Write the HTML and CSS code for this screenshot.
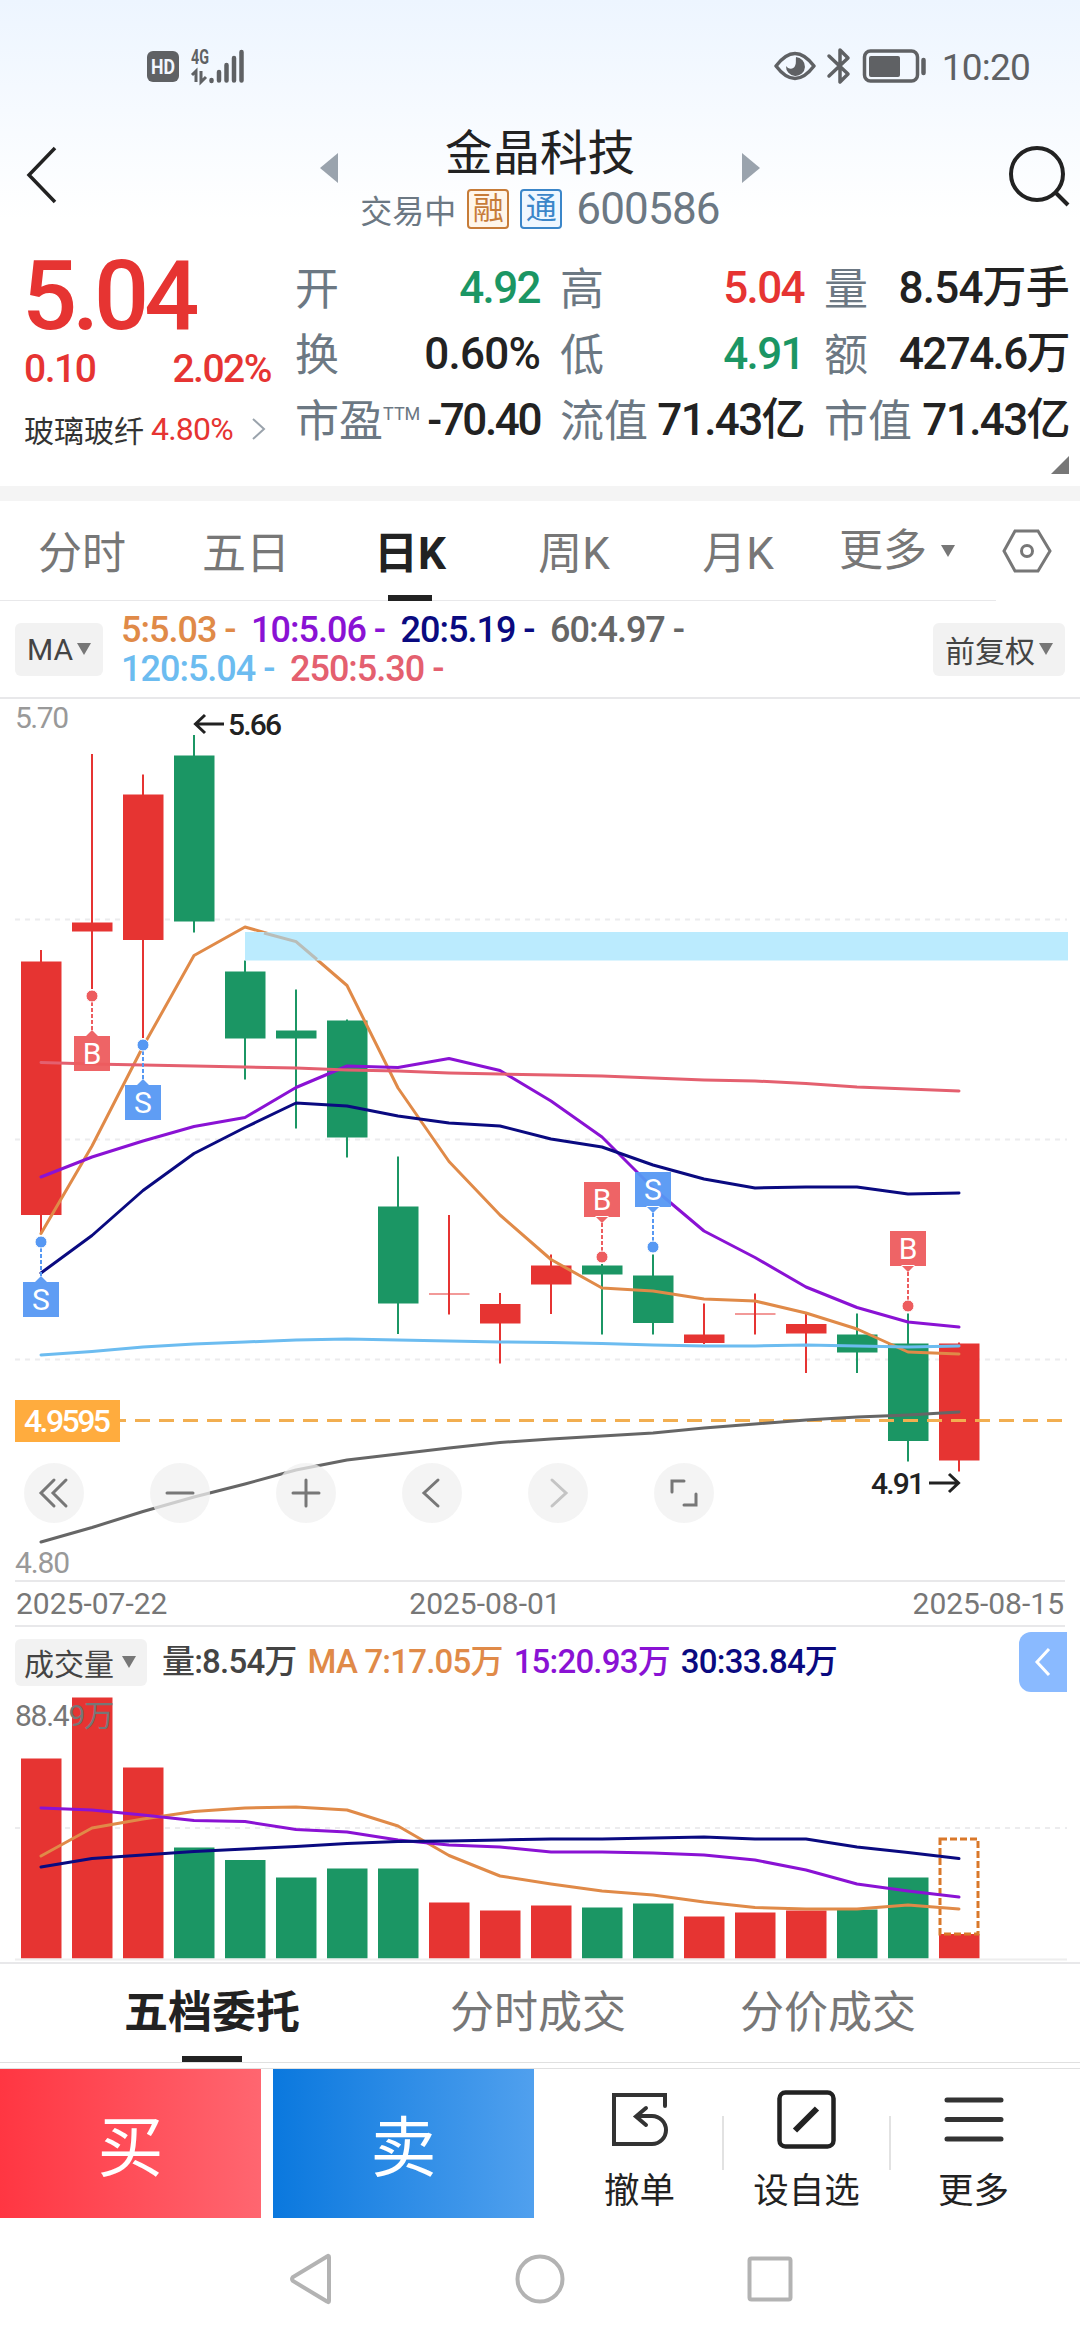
FILE: index.html
```html
<!DOCTYPE html>
<html lang="zh-CN">
<head>
    <meta charset="UTF-8">
    <meta name="viewport" content="width=device-width, initial-scale=1.0">
    <title>金晶科技 600586</title>
    <link rel="stylesheet" href="styles.css">
</head>
<body>
    <div class="top">
        <div class="status-bar">
            <svg class="signal" width="100" height="40" viewBox="0 0 100 40">
                <rect x="1" y="5" width="32" height="31" rx="6" fill="#5f6164"/>
                <text x="17" y="27.500" class="hd" text-anchor="middle" textLength="24" lengthAdjust="spacingAndGlyphs">HD</text>
                <text x="45" y="18" class="net" textLength="18" lengthAdjust="spacingAndGlyphs">4G</text>
                <path d="M46 29l4-4v11M55 25v11l5-5" fill="none" stroke="#5f6164" stroke-width="3"/>
                <path d="M65.500 34v1M73 26v8.500M80.500 19v15.500M88 12v22.500M95.500 6v28.500" stroke="#5f6164" stroke-width="4.500" stroke-linecap="round"/>
            </svg>
            <div class="status-right">
                <svg width="154" height="40" viewBox="0 0 154 40">
                    <path d="M2 20Q21-5 40 20Q21 45 2 20Z" fill="none" stroke="#5f6164" stroke-width="3.500" stroke-linejoin="round"/>
                    <path d="M22 11a9.500 9.500 0 1 1-10 9c2 3 7 4 9 0c1.500-3 .5-6 1-9z" fill="#5f6164"/>
                    <path d="M55 10l19 18-8 8V4l8 8-19 18" fill="none" stroke="#5f6164" stroke-width="3.500" stroke-linejoin="round" stroke-linecap="round"/>
                    <rect x="90.500" y="5" width="53" height="30" rx="6" fill="none" stroke="#5f6164" stroke-width="3.500"/>
                    <rect x="95" y="10" width="31" height="21" rx="2" fill="#5f6164"/>
                    <path d="M149.500 14v13" stroke="#5f6164" stroke-width="4.500" stroke-linecap="round"/>
                </svg>
                <span class="time">10:20</span>
            </div>
        </div>
        <div class="header">
            <svg class="back" width="36" height="60" viewBox="0 0 36 60"><path d="M31 3L5 30l26 27" fill="none" stroke="#222" stroke-width="3.500"/></svg>
            <div class="stock">
                <span class="prev"></span>
                <div class="stock-name">
                    <h1 class="title">金晶科技</h1>
                    <div class="subtitle">
                        <span>交易中</span>
                        <span class="badge rong">融</span>
                        <span class="badge tong">通</span>
                        <span class="code">600586</span>
                    </div>
                </div>
                <span class="next"></span>
            </div>
            <svg class="search" width="64" height="62" viewBox="0 0 64 62"><circle cx="29" cy="29" r="26" fill="none" stroke="#222" stroke-width="4"/><path d="M48 48l12 12" stroke="#222" stroke-width="4"/></svg>
        </div>
    </div>

    <div class="quote">
        <div class="quote-main">
            <div class="price">5.04</div>
            <div class="change"><span>0.10</span><span>2.02%</span></div>
            <div class="sector">
                <span>玻璃玻纤</span><span class="sector-pct">4.80%</span>
                <svg width="14" height="22" viewBox="0 0 14 22"><path d="M1 1l11 10L1 21" fill="none" stroke="#9aa3ac" stroke-width="2"/></svg>
            </div>
        </div>
        <div class="quote-grid">
            <div class="cell"><span>开</span><b class="green">4.92</b></div>
            <div class="cell"><span>高</span><b class="red">5.04</b></div>
            <div class="cell"><span>量</span><b class="loose">8.54万手</b></div>
            <div class="cell"><span>换</span><b class="loose">0.60%</b></div>
            <div class="cell"><span>低</span><b class="green">4.91</b></div>
            <div class="cell"><span>额</span><b>4274.6万</b></div>
            <div class="cell"><span>市盈<sup>TTM</sup></span><b class="tight">-70.40</b></div>
            <div class="cell"><span>流值</span><b>71.43亿</b></div>
            <div class="cell"><span>市值</span><b>71.43亿</b></div>
        </div>
        <i class="expand"></i>
    </div>

    <div class="tabs">
        <div class="tab">分时</div>
        <div class="tab">五日</div>
        <div class="tab active">日K</div>
        <div class="tab">周K</div>
        <div class="tab">月K</div>
        <div class="tab more">更多<i class="caret"></i></div>
        <svg class="settings" width="50" height="46" viewBox="0 0 50 46"><path d="M13 3h23l12 20-12 20H13L2 23z" fill="none" stroke="#777" stroke-width="3"/><circle cx="25" cy="23" r="5.500" fill="none" stroke="#777" stroke-width="3"/></svg>
    </div>

    <div class="ma-bar">
        <div class="pill">MA<i class="caret"></i></div>
        <div class="ma-list">
            <div><span class="ma5">5:5.03 -</span><span class="ma10">10:5.06 -</span><span class="ma20">20:5.19 -</span><span class="ma60">60:4.97 -</span></div>
            <div><span class="ma120">120:5.04 -</span><span class="ma250">250:5.30 -</span></div>
        </div>
        <div class="pill">前复权<i class="caret"></i></div>
    </div>

    <div class="k-chart">
        <svg id="kline" width="1080" height="882" viewBox="0 699 1080 882"></svg>
        <div class="tools">
            <span class="tool"><svg viewBox="0 0 60 60"><path d="M30 17L17 30l13 13M42 17L29 30l13 13"/></svg></span>
            <span class="tool"><svg viewBox="0 0 60 60"><path d="M17 30h26"/></svg></span>
            <span class="tool"><svg viewBox="0 0 60 60"><path d="M17 30h26M30 17v26"/></svg></span>
            <span class="tool"><svg viewBox="0 0 60 60"><path d="M36 17L22 30l14 13"/></svg></span>
            <span class="tool disabled"><svg viewBox="0 0 60 60"><path d="M24 17l14 13-14 13"/></svg></span>
            <span class="tool"><svg viewBox="0 0 60 60"><path d="M18 29V18h12M42 31v11H30"/></svg></span>
        </div>
    </div>
    <div class="dates"><span>2025-07-22</span><span>2025-08-01</span><span>2025-08-15</span></div>

    <div class="vol-bar">
        <div class="pill">成交量<i class="caret"></i></div>
        <div class="vol-list"><span class="vol">量:8.54万</span><span class="ma5">MA 7:17.05万</span><span class="ma10">15:20.93万</span><span class="ma20">30:33.84万</span></div>
        <div class="drawer"><svg width="18" height="30" viewBox="0 0 18 30"><path d="M15 2L3 15l12 13" fill="none" stroke="#fff" stroke-width="3"/></svg></div>
    </div>
    <svg id="volume" width="1080" height="269" viewBox="0 1693 1080 269"></svg>

    <div class="sub-tabs">
        <div class="sub-tab active">五档委托</div>
        <div class="sub-tab">分时成交</div>
        <div class="sub-tab">分价成交</div>
    </div>

    <div class="actions">
        <div class="trade buy">买</div>
        <div class="trade sell">卖</div>
        <div class="action">
            <svg width="60" height="60" viewBox="0 0 60 60"><path d="M55 16V5H4v49h38a14 14 0 0 0 0-28H27M36 18l-10 8.500 10 8.500" fill="none" stroke="#333" stroke-width="4" stroke-linecap="round"/></svg>
            <span>撤单</span>
        </div>
        <div class="action">
            <svg width="60" height="60" viewBox="0 0 60 60"><rect x="2.500" y="2.500" width="54" height="54" rx="6" fill="none" stroke="#222" stroke-width="4.500"/><path d="M18 40.500L40 18.500" stroke="#222" stroke-width="6"/></svg>
            <span>设自选</span>
        </div>
        <div class="action">
            <svg width="60" height="60" viewBox="0 0 60 60"><path d="M3 10h54M3 29.500h54M3 49h54" stroke="#333" stroke-width="5" stroke-linecap="round"/></svg>
            <span>更多</span>
        </div>
    </div>

    <div class="nav">
        <svg width="44" height="52" viewBox="0 0 44 52"><path d="M40 4v44q0 2-2 .5L4 28q-2-2 0-4L38 3.500q2-1.500 2 .5z" fill="none" stroke="#b3b3b3" stroke-width="4"/></svg>
        <svg width="50" height="50" viewBox="0 0 50 50"><circle cx="25" cy="25" r="22.500" fill="none" stroke="#b3b3b3" stroke-width="4"/></svg>
        <svg width="46" height="46" viewBox="0 0 46 46"><rect x="2.500" y="2.500" width="41" height="41" rx="2" fill="none" stroke="#b3b3b3" stroke-width="4"/></svg>
    </div>

    <script src="script.js"></script>
</body>
</html>
```
FILE: styles.css
```css
:root {
    --red: #e63432;
    --green: #1b9664;
    --dark: #222;
    --gray: #777;
    --slate: #6c7883;
    --line: #e8e8ea;
    --orange: #e08a48;
    --purple: #8a12d4;
    --navy: #0a0a80;
}

* {
    box-sizing: border-box;
}

body {
    margin: 0;
    width: 1080px;
    height: 2340px;
    overflow: hidden;
    background: #fff;
    color: var(--dark);
    font-family: Roboto, "Noto Sans CJK SC", sans-serif;
}

svg {
    display: block;
}

.top {
    height: 240px;
    background: linear-gradient(#edf5ff, #fff 220px);
}

.status-bar {
    height: 130px;
    padding: 46px 50px 0 146px;
    display: flex;
    justify-content: space-between;
}

.hd {
    font-size: 20px;
    font-weight: 700;
    fill: #f2f7ff;
}

.net {
    font-size: 20px;
    font-weight: 700;
    fill: #5f6164;
}

.status-right {
    display: flex;
    gap: 14px;
}

.time {
    font-size: 37px;
    line-height: 44px;
    letter-spacing: -0.8px;
    color: #5f6164;
}

.header {
    height: 110px;
    display: flex;
    justify-content: space-between;
    align-items: flex-start;
    padding: 0 8px 0 24px;
}

.back,
.search {
    margin-top: 15px;
}

.stock {
    display: flex;
    justify-content: space-between;
    width: 440px;
    margin-left: 12px;
}

.prev,
.next {
    margin-top: 23px;
    border: 15px solid transparent;
    height: 0;
}

.prev {
    border-left: 0;
    border-right: 18px solid #9aa3ad;
}

.next {
    border-right: 0;
    border-left: 18px solid #9aa3ad;
}

.title {
    margin: 0;
    font-size: 47.500px;
    line-height: 49px;
    font-weight: 400;
    text-align: center;
}

.subtitle {
    display: flex;
    align-items: center;
    height: 60px;
    font-size: 32px;
    color: var(--slate);
}

.badge {
    width: 42px;
    height: 40px;
    line-height: 36px;
    margin-left: 11px;
    border: 2px solid;
    border-radius: 4px;
    font-size: 31px;
    text-align: center;
}

.rong {
    color: #c77c38;
    background: #fff6ea;
}

.tong {
    color: #3b86c9;
    background: #eff7ff;
}

.code {
    margin-left: 14px;
    font-size: 44px;
    letter-spacing: -0.8px;
}

.quote {
    position: relative;
    height: 261px;
    display: flex;
    border-bottom: 15px solid #f4f4f4;
}

.quote-main {
    width: 271px;
    margin-right: 24px;
    padding-left: 24px;
    color: var(--red);
}

.price {
    height: 100px;
    line-height: 112px;
    font-size: 97px;
    font-weight: 500;
    letter-spacing: -5px;
    margin-left: -2px;
}

.change {
    display: flex;
    justify-content: space-between;
    height: 56px;
    line-height: 58px;
    font-size: 39px;
    letter-spacing: -1.5px;
    font-weight: 500;
}

.sector {
    display: flex;
    align-items: center;
    height: 66px;
    color: #333;
    font-size: 30px;
}

.sector-pct {
    margin: 0 19px 0 7px;
    color: var(--red);
    font-size: 32px;
    letter-spacing: -0.8px;
}

.quote-grid {
    display: grid;
    grid-template-columns: 245px 244px 245px;
    grid-template-rows: repeat(3, 66px);
    column-gap: 20px;
    padding-top: 17px;
}

.cell {
    display: flex;
    justify-content: space-between;
    align-items: center;
    white-space: nowrap;
    font-size: 44px;
    line-height: 60px;
    color: var(--slate);
}

.cell b {
    font-weight: 500;
    letter-spacing: -1.6px;
    color: var(--dark);
    margin-top: -4px;
}

.cell .loose {
    letter-spacing: -0.8px;
}

.cell .tight {
    letter-spacing: -2.4px;
}

.cell .red {
    color: var(--red);
}

.cell .green {
    color: var(--green);
}

.cell sup {
    font-size: 18px;
    vertical-align: 17px;
    line-height: 0;
}

.expand {
    position: absolute;
    right: 11px;
    bottom: 12px;
    border: 9px solid transparent;
    border-right-color: #777;
    border-bottom-color: #777;
}

.tabs {
    display: flex;
    align-items: center;
    height: 100px;
    background: linear-gradient(var(--line), var(--line)) 0 99px / 996px 1px no-repeat;
}

.tab {
    width: 164px;
    height: 100px;
    line-height: 106px;
    text-align: center;
    font-size: 44px;
    color: var(--gray);
}

.active {
    position: relative;
    color: var(--dark);
    font-weight: 700;
}

.active::after {
    content: "";
    position: absolute;
    left: 50%;
    bottom: 0;
    width: 44px;
    height: 6px;
    margin-left: -22px;
    background: var(--dark);
}

.more {
    display: flex;
    align-items: center;
    padding-left: 19px;
    margin-right: 18px;
}

.caret {
    display: inline-block;
    border: 7px solid transparent;
    border-top: 12px solid #777;
    border-bottom: 0;
    margin-left: 14px;
}

.ma-bar {
    display: flex;
    align-items: center;
    height: 98px;
    padding: 0 15px;
    border-bottom: 2px solid var(--line);
}

.pill {
    display: flex;
    align-items: center;
    height: 53px;
    padding: 0 12px;
    border-radius: 6px;
    background: #f2f2f2;
    color: #444;
    font-size: 30px;
    white-space: nowrap;
}

.pill .caret {
    margin-left: 4px;
}

.ma-list {
    flex: 1;
    padding-left: 18px;
    font-size: 36px;
    line-height: 39px;
    font-weight: 500;
    letter-spacing: -1px;
    margin-top: 1px;
}

.ma-list span {
    margin-right: 15.500px;
}

.ma5 { color: var(--orange); }
.ma10 { color: var(--purple); }
.ma20 { color: var(--navy); }
.ma60 { color: #666; }
.ma120 { color: #6cbcf0; }
.ma250 { color: #e4606f; }

.k-chart {
    position: relative;
    height: 882px;
}

.tools {
    position: absolute;
    left: 24px;
    top: 764px;
    display: flex;
    gap: 66px;
}

.tool {
    width: 60px;
    height: 60px;
    border-radius: 50%;
    background: rgba(240, 240, 240, 0.75);
}

.tool path {
    fill: none;
    stroke: #777;
    stroke-width: 3;
    stroke-linecap: round;
}

.disabled path {
    stroke: #c4c4c4;
}

.dates {
    display: flex;
    justify-content: space-between;
    margin: -1px 15px 0;
    height: 47px;
    line-height: 44px;
    padding: 0 1px;
    font-size: 30px;
    color: var(--gray);
    border-top: 2px solid var(--line);
    border-bottom: 2px solid var(--line);
}

.dates span:nth-child(2) {
    margin-right: 110px;
}

.vol-bar {
    display: flex;
    align-items: center;
    height: 66px;
    padding: 5px 13px 0 15px;
}

.vol-bar .pill {
    width: 132px;
    height: 47px;
    margin-top: -1px;
    padding: 0 9px;
}

.vol-bar .caret {
    margin-left: 8px;
}

.vol-list {
    flex: 1;
    padding-left: 15px;
    font-size: 33px;
    line-height: 44px;
    font-weight: 500;
    letter-spacing: -0.8px;
    white-space: nowrap;
    margin-top: -1px;
}

.vol-list span {
    margin-right: 11px;
}

.vol {
    color: #444;
}

.drawer {
    width: 48px;
    height: 60px;
    margin-top: -2px;
    padding: 15px 0 0 15px;
    border-radius: 12px 0 0 12px;
    background: #8abaff;
}

.label {
    font-size: 30px;
    fill: #999;
}

.mark {
    font-size: 30px;
    font-weight: 500;
    fill: var(--dark);
}

.flag {
    font-size: 30px;
    text-anchor: middle;
    fill: #fff;
}

.cost {
    font-size: 32px;
    font-weight: 500;
    fill: #fff;
}

.vol-max {
    font-size: 30px;
    fill: #777;
}

.sub-tabs {
    display: flex;
    height: 101px;
    padding-left: 62px;
    border-top: 2px solid var(--line);
    border-bottom: 1px solid #e0e0e0;
}

.sub-tab {
    width: 300px;
    height: 98px;
    line-height: 99px;
    font-size: 44px;
    text-align: center;
    color: var(--gray);
}

.sub-tab:nth-child(2) {
    margin: 0 -10px 0 26px;
}

.sub-tab.active {
    color: var(--dark);
}

.sub-tab.active::after {
    width: 60px;
    margin-left: -30px;
}

.actions {
    display: flex;
    height: 150px;
    margin-top: 5px;
    border-top: 1px solid #e0e0e0;
}

.trade {
    width: 261px;
    margin-right: 12px;
    font-size: 66px;
    line-height: 160px;
    text-align: center;
    color: #fff;
}

.buy {
    background: linear-gradient(90deg, #ff3642, #ff6670);
}

.sell {
    background: linear-gradient(90deg, #0a78de, #50a0ee);
}

.action {
    position: relative;
    width: 167px;
    padding-top: 21px;
    display: flex;
    flex-direction: column;
    align-items: center;
    font-size: 35.500px;
    line-height: 44px;
    left: 10px;
}

.action span {
    margin-top: 19px;
}

.action + .action::before {
    content: "";
    position: absolute;
    left: -1px;
    top: 47px;
    width: 2px;
    height: 54px;
    background: #e2e2e2;
}

.nav {
    display: flex;
    justify-content: center;
    align-items: center;
    gap: 182px;
    height: 122px;
    padding-left: 1px;
}
```
FILE: script.js
```javascript
const RED = '#e63432';
const GREEN = '#1b9664';
const STEP = 51;
const X0 = 41;

// colour, high, body top, body bottom, low
const candles = [
    ['r', 950, 961.5, 1215, 1234],
    ['r', 754, 922.5, 931.5, 989],
    ['r', 774.5, 794.5, 940, 1038],
    ['g', 735, 755.5, 921.5, 932.5],
    ['g', 960.5, 971.5, 1038.5, 1079.5],
    ['g', 989.5, 1030.5, 1038.5, 1128.5],
    ['g', 1019.5, 1020.5, 1137.5, 1157.5],
    ['g', 1156.5, 1206.5, 1303.5, 1334],
    ['r', 1215, 1293.5, 1294.5, 1314.5],
    ['r', 1293, 1304, 1323.5, 1363.5],
    ['r', 1254.5, 1265.5, 1284.5, 1314],
    ['g', 1264, 1265.5, 1274.5, 1334.5],
    ['g', 1254.5, 1275.5, 1323, 1334.5],
    ['r', 1303.5, 1334.5, 1343, 1344],
    ['r', 1293.5, 1313.5, 1314.5, 1334.5],
    ['r', 1313, 1324, 1333.5, 1373],
    ['g', 1313.5, 1334.5, 1352.5, 1373],
    ['g', 1313.5, 1343.5, 1441, 1461.5],
    ['r', 1342.5, 1343.5, 1460.5, 1471.5]
];

const maLines = [
    ['#e08a48', [1233.5, 1146, 1046.5, 955.5, 927, 941.5, 985.5, 1088, 1161.5, 1215, 1259.5, 1288, 1291, 1299, 1301, 1313, 1329, 1352, 1354]],
    ['#8a12d4', [1177, 1157, 1141, 1126.5, 1117.5, 1087.5, 1066, 1067.5, 1058.5, 1070.5, 1101, 1137, 1188, 1231, 1257.5, 1287, 1307.5, 1322, 1327]],
    ['#0a0a80', [1273, 1235.5, 1190.5, 1153.5, 1127.5, 1103, 1106, 1116, 1123, 1126, 1139, 1147, 1165, 1179, 1188, 1187, 1187, 1194, 1193]],
    ['#e4606f', [1062.5, 1064, 1065, 1066, 1067, 1068, 1070, 1071, 1073, 1074, 1075, 1076, 1078, 1080, 1081, 1083.5, 1087, 1089, 1091]],
    ['#6cbcf0', [1355, 1351.5, 1347, 1344, 1342, 1340, 1339, 1340, 1341, 1342, 1342.5, 1343.5, 1345, 1346, 1346, 1345, 1346, 1347, 1346]],
    ['#666', [1542, 1527.5, 1511.5, 1497, 1484, 1470, 1460, 1454, 1448, 1442.5, 1439, 1436, 1433, 1428, 1424, 1420, 1417, 1415, 1412]]
];

// index, type, dot y, flag box top
const flags = [
    [0, 'S', 1242, 1282],
    [1, 'B', 996, 1036],
    [2, 'S', 1045, 1085],
    [11, 'B', 1257, 1182],
    [12, 'S', 1247, 1172],
    [17, 'B', 1306, 1231]
];

const volumes = [1758.5, 1697.5, 1767.5, 1847.5, 1860, 1877.5, 1868.5, 1868.5, 1902.5, 1910.5, 1905.5, 1907.5, 1903.5, 1916.5, 1912.5, 1910.5, 1909.5, 1877.5, 1934];

const volLines = [
    ['#e08a48', [1856, 1828, 1819, 1811.5, 1808, 1807, 1810, 1826, 1855.5, 1876, 1884, 1891, 1895, 1902, 1907.5, 1909, 1909, 1905, 1909]],
    ['#8a12d4', [1808, 1810, 1815, 1820.5, 1821.5, 1829.5, 1832, 1840, 1845, 1847, 1852, 1852, 1853, 1855, 1860, 1870, 1884, 1891, 1897]],
    ['#0a0a80', [1867, 1858.5, 1855, 1851.5, 1849, 1846.5, 1843.5, 1841.5, 1841, 1840, 1839, 1839, 1838, 1837, 1839, 1839, 1847, 1852.5, 1858.5]]
];

const cx = i => X0 + i * STEP;

function polyline(color, ys) {
    const points = ys.map((y, i) => `${cx(i)},${y}`).join(' ');
    return `<polyline points="${points}" fill="none" stroke="${color}" stroke-width="3" stroke-linecap="round" stroke-linejoin="round"/>`;
}

function grid(y) {
    return `<path d="M15 ${y}H1067" stroke="#ececee" stroke-width="2" stroke-dasharray="5 5"/>`;
}

function drawKline() {
    let s = [919.5, 1139.5, 1359.5].map(grid).join('');

    candles.forEach(([c, high, top, bottom, low], i) => {
        const color = c === 'r' ? RED : GREEN;
        s += `<path d="M${cx(i)} ${high}V${low}" stroke="${color}" stroke-width="2"/>`;
        s += `<rect x="${cx(i) - 20}" y="${top}" width="40.5" height="${bottom - top}" fill="${color}"/>`;
    });

    s += '<path d="M120 1420.500H1067" stroke="#f2ae50" stroke-width="3" stroke-dasharray="15 9" stroke-dashoffset="9"/>';
    maLines.forEach(([color, ys]) => { s += polyline(color, ys); });

    // gap zone
    s += '<rect x="245" y="932" width="823" height="28.500" fill="#bbebfe"/>';
    s += '<path d="M264 933L296 941.500 317 959.500" fill="none" stroke="#b9bdb8" stroke-width="3"/>';

    flags.forEach(([i, type, dot, box]) => {
        const x = cx(i);
        const color = type === 'B' ? '#ed5c5e' : '#5698f3';
        const below = box > dot;
        const tip = below ? box - 6 : box + 41;
        const edge = below ? box + 1 : box + 34;
        s += `<path d="M${x} ${dot}V${tip}" stroke="${color}" stroke-width="2" stroke-dasharray="4 2"/>`;
        s += `<circle cx="${x}" cy="${dot}" r="6" fill="${color}" stroke="#fff" stroke-width="1"/>`;
        s += `<path d="M${x - 18} ${box}h36v35h-36zM${x - 7} ${edge}L${x} ${tip}L${x + 7} ${edge}z" fill="${color}" fill-opacity=".95"/>`;
        s += `<text class="flag" x="${x}" y="${box + 28}">${type}</text>`;
    });

    s += '<rect x="15" y="1400" width="105" height="42" fill="#ffac3e"/>';
    s += '<text class="cost" x="24" y="1432" textLength="87">4.9595</text>';
    s += '<text class="label" x="15" y="728" textLength="54">5.70</text>';
    s += '<text class="label" x="15" y="1573" textLength="55">4.80</text>';
    s += '<path d="M224 724H196M205 715l-9.500 9 9.500 9" fill="none" stroke="#222" stroke-width="3"/>';
    s += '<text class="mark" x="228" y="735" textLength="54">5.66</text>';
    s += '<text class="mark" x="871" y="1494" textLength="54">4.91</text>';
    s += '<path d="M929 1483H958M949 1474l9.500 9-9.500 9" fill="none" stroke="#222" stroke-width="3"/>';

    document.getElementById('kline').innerHTML = s;
}

function drawVolume() {
    let s = grid(1828);
    volumes.forEach((top, i) => {
        const color = candles[i][0] === 'r' ? RED : GREEN;
        s += `<rect x="${cx(i) - 20}" y="${top}" width="40.5" height="${1958.5 - top}" fill="${color}"/>`;
    });
    s += '<path d="M15 1959.500H1067" stroke="#eee" stroke-width="2"/>';
    s += '<rect x="940" y="1839" width="38" height="95" fill="#fff" stroke="#d9782a" stroke-width="3" stroke-dasharray="7 3"/>';
    volLines.forEach(([color, ys]) => { s += polyline(color, ys); });
    s += '<text class="vol-max" x="15" y="1726" textLength="99">88.49万</text>';
    document.getElementById('volume').innerHTML = s;
}

drawKline();
drawVolume();
```
